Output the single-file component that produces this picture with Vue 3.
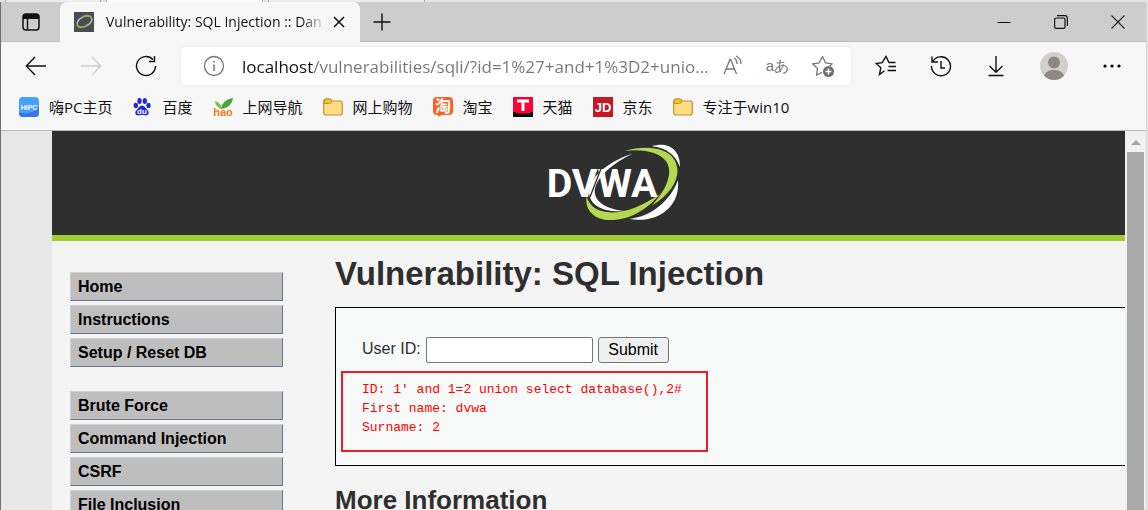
<template>
  <div class="browser">
    <div class="backdrop" aria-hidden="true">
      <span class="backdrop-tab"></span>
      <span class="backdrop-tab is-active"></span>
      <span class="backdrop-tab"></span>
    </div>

    <div class="window">
      <div class="tab-strip">
        <button class="tab-actions" type="button" aria-label="Tab actions">
          <svg width="20" height="20" viewBox="0 0 20 20">
            <rect x="2" y="2" width="16" height="16" rx="3" fill="none" stroke="#111" stroke-width="1.5" />
            <path d="M2 7V4.500Q2 2 4.500 2h11Q18 2 18 4.500V7z" fill="#111" />
            <path d="M6.500 7v11" stroke="#111" stroke-width="1.400" />
          </svg>
        </button>
        <div class="tab">
          <svg class="favicon" width="20" height="20" viewBox="0 0 20 20">
            <rect width="20" height="20" fill="#474c55" />
            <ellipse cx="10.500" cy="9.500" rx="8" ry="4.800" transform="rotate(-28 10.500 9.500)" fill="none" stroke="#c9cec0" stroke-width="1.300" />
            <path d="M3 12.500c1 4 7 4 11-.5M9 4.500c5-2 9-1 8 2.500" fill="none" stroke="#93a836" stroke-width="1.500" />
          </svg>
          <span class="tab-title">Vulnerability: SQL Injection :: Dan</span>
          <button class="tab-close" type="button" aria-label="Close tab">
            <svg width="12" height="12" viewBox="0 0 12 12"><path d="M1 1l10 10M11 1L1 11" stroke="#111" stroke-width="1.500" /></svg>
          </button>
        </div>
        <button class="new-tab" type="button" aria-label="New tab">
          <svg width="18" height="18" viewBox="0 0 18 18"><path d="M9 .5v17M.5 9h17" stroke="#111" stroke-width="1.400" /></svg>
        </button>
        <div class="window-controls">
          <button type="button" aria-label="Minimize">
            <svg width="14" height="14" viewBox="0 0 14 14"><path d="M.5 7.500h13" stroke="#111" /></svg>
          </button>
          <button type="button" aria-label="Restore">
            <svg width="14" height="14" viewBox="0 0 14 14" fill="none" stroke="#111">
              <rect x=".6" y="3" width="10.400" height="10.400" rx="1.500" stroke-width="1.200" />
              <path d="M3 .7H11q2.300 0 2.300 2.300v8" stroke-width="1.200" />
            </svg>
          </button>
          <button type="button" aria-label="Close">
            <svg width="14" height="14" viewBox="0 0 14 14"><path d="M.5.5l13 13M13.500.5l-13 13" stroke="#222" stroke-width="1.100" /></svg>
          </button>
        </div>
      </div>

      <div class="toolbar">
        <button class="tool" type="button" aria-label="Back">
          <svg width="22" height="22" viewBox="0 0 22 22"><path d="M21 11H1.500M10 2L1.300 11l8.700 9" class="line" /></svg>
        </button>
        <button class="tool is-disabled" type="button" aria-label="Forward" disabled>
          <svg width="22" height="22" viewBox="0 0 22 22"><path d="M1 11h19.500M12 2l8.700 9-8.700 9" class="line" /></svg>
        </button>
        <button class="tool" type="button" aria-label="Refresh">
          <svg width="22" height="22" viewBox="0 0 22 22"><path d="M20.500 11a9.500 9.500 0 1 1-2.600-6.500M19.500 1v5.500H14" class="line" /></svg>
        </button>
        <div class="address-bar">
          <button class="inner-tool site-info" type="button" aria-label="Site information">
            <svg width="22" height="22" viewBox="0 0 22 22" fill="none" stroke="#757575">
              <circle cx="11" cy="11" r="9.500" stroke-width="1.300" />
              <path d="M11 9.500V16" stroke-width="1.500" />
              <circle cx="11" cy="6.700" r="1" fill="#757575" stroke="none" />
            </svg>
          </button>
          <input v-model="address" class="address" type="text" aria-label="Address" />
          <button class="inner-tool" type="button" aria-label="Read aloud">
            <svg width="22" height="22" viewBox="0 0 22 22" fill="none" stroke="#767676" stroke-width="1.300">
              <path d="M2 19L8 4.500h.6L14.500 19M4 14h8.500M12 3c2 1 3 3 3 6M14 1c3.500 1.500 5 4.500 5 8" />
            </svg>
          </button>
          <button class="inner-tool translate" type="button" aria-label="Translate">aあ</button>
          <button class="inner-tool" type="button" aria-label="Add to favorites">
            <svg width="24" height="24" viewBox="0 0 24 24" fill="none" stroke="#767676" stroke-width="1.300" stroke-linejoin="round">
              <path d="M11 18.200l-5.500 3 1-6.700L1.500 9.800l6.700-1L11.500 2.500l3 6.300 6.700 1-2.500 2.400" />
              <circle cx="17.500" cy="17.500" r="5.500" fill="#6f6f6f" stroke="none" />
              <path d="M17.500 14.500v6M14.500 17.500h6" stroke="#fff" stroke-width="1.500" />
            </svg>
          </button>
        </div>
        <button class="tool" type="button" aria-label="Favorites">
          <svg width="22" height="22" viewBox="0 0 22 22">
            <path d="M9.500 15.800L4.500 19.500l1.300-6.800L1.200 8.500l6-.8L11 1.500l3 6h6.500M13.500 11.500h7.500M12.500 15.500h8.500" class="line" />
          </svg>
        </button>
        <button class="tool" type="button" aria-label="History">
          <svg width="22" height="22" viewBox="0 0 22 22"><path d="M2.500 7A9.500 9.500 0 1 1 1.500 11M2 1.500V7h6M11 6v7h4" class="line" /></svg>
        </button>
        <button class="tool" type="button" aria-label="Downloads">
          <svg width="22" height="22" viewBox="0 0 22 22"><path d="M11 1v16M4.500 11l6.500 6.300 6.500-6.300M3.500 20.500h15" class="line" /></svg>
        </button>
        <button class="tool profile" type="button" aria-label="Profile">
          <svg width="28" height="28" viewBox="0 0 28 28">
            <circle cx="14" cy="14" r="14" fill="#d2d0cd" />
            <circle cx="14" cy="10.500" r="6" fill="#8b8885" />
            <path d="M4 23.700C5.500 20 9 18 14 18s8.500 2 10 5.700A14 14 0 0 1 4 23.700z" fill="#8b8885" />
          </svg>
        </button>
        <button class="tool" type="button" aria-label="Settings and more">
          <svg width="18" height="4" viewBox="0 0 18 4"><circle cx="2" cy="2" r="1.600" /><circle cx="9" cy="2" r="1.600" /><circle cx="16" cy="2" r="1.600" /></svg>
        </button>
      </div>

      <nav class="bookmarks" aria-label="Bookmarks">
        <a v-for="item in bookmarks" :key="item.label" href="#" class="bookmark">
          <svg v-if="item.icon === 'hipc'" width="20" height="20" viewBox="0 0 20 20">
            <rect width="20" height="20" rx="4" fill="#43a2fb" />
            <path d="M0 15c8 3 16 0 20-5v6q0 4-4 4H4q-4 0-4-4z" fill="#3974ef" />
            <text x="10" y="12.500" class="icon-text" font-size="7" fill="#fff">HiPC</text>
          </svg>
          <svg v-else-if="item.icon === 'baidu'" width="20" height="20" viewBox="0 0 20 20">
            <rect width="20" height="20" fill="#fff" />
            <g fill="#2529d8">
              <ellipse cx="3.800" cy="8.500" rx="2.200" ry="2.800" />
              <ellipse cx="7.500" cy="4" rx="2.200" ry="3" />
              <ellipse cx="12.800" cy="4" rx="2.200" ry="3" />
              <ellipse cx="16.500" cy="8.500" rx="2.200" ry="2.800" />
              <path d="M10 8.500c2.500 0 3.500 2.500 5.500 4.500 2.500 2.600.8 5.500-1.500 5.500-2 0-2.500-.4-4-.4s-2 .4-4 .4c-2.300 0-4-2.900-1.500-5.500 2-2 3-4.500 5.500-4.500z" />
            </g>
            <text x="10" y="17" class="icon-text" font-size="8" fill="#fff">du</text>
          </svg>
          <svg v-else-if="item.icon === 'hao'" width="20" height="20" viewBox="0 0 20 20">
            <path d="M8 12C9 5 14 2 20 1c-1 6-5 10-12 11z" fill="#4aa52e" />
            <path d="M9 12C8 7 6 5 2 4c0 4 3 7 7 8z" fill="#7dc242" />
            <text x="10" y="19" class="icon-text" font-size="11" fill="#f07c22">hao</text>
          </svg>
          <svg v-else-if="item.icon === 'folder'" width="20" height="20" viewBox="0 0 20 20">
            <path d="M.7 5q0-3 2.500-3h3.500q1.500 0 2 2H17q2.300 0 2.300 2.500v9Q19.300 18 17 18H3Q.7 18 .7 15.500z" fill="#ffdc82" stroke="#b8932a" stroke-width="1.200" />
            <path d="M1 6.500h5.500Q8 6.500 9 4 8 2 6.500 2H3Q1 2 1 5z" fill="#f2c230" stroke="#b8932a" />
          </svg>
          <svg v-else-if="item.icon === 'taobao'" width="20" height="20" viewBox="0 0 20 20">
            <path d="M4 0h12q4 0 4 4v10q0 4-4 4H8.500L5.500 20 5 18H4q-4 0-4-4V4q0-4 4-4z" fill="#ff5f24" />
            <text x="10" y="14.500" class="icon-text" font-size="16" fill="#fff">淘</text>
          </svg>
          <svg v-else-if="item.icon === 'tmall'" width="20" height="20" viewBox="0 0 20 20">
            <rect width="20" height="20" fill="#050005" />
            <path d="M0 0h20v15h-2q-1 1.500-3 1.500H5Q3 16.500 2 15H0z" fill="#ff0036" />
            <path d="M4 4h12M10 4v10" stroke="#fff" stroke-width="3" />
          </svg>
          <svg v-else width="20" height="20" viewBox="0 0 20 20">
            <rect width="20" height="20" fill="#c81623" />
            <text x="10" y="15" class="icon-text" font-size="13" fill="#fff">JD</text>
          </svg>
          <span>{{ item.label }}</span>
        </a>
      </nav>

      <div class="viewport">
        <div class="page">
          <header class="page-header">
            <svg class="logo" width="134" height="79" viewBox="54 36 402 237" role="img" aria-label="DVWA">
              <path d="M308 68C250 84 180 133 177 180c-1 44 45 66 108 60-48-4-91-24-91-60 3-42 58-86 114-112z" fill="#fff" />
              <path d="M284 60c62-18 123-11 147 23 27 40 6 97-66 141 44-48 64-96 46-129-18-31-72-42-127-35z" fill="#b4d84f" />
              <path d="M170 196c14 62 114 69 220-8-52 66-120 84-166 78-40-7-60-34-54-70z" fill="#b4d84f" />
              <path d="M366 46c42-14 85 4 84 62-14-36-40-57-84-62z" fill="#fff" />
              <path d="M444 148c7 76-56 130-146 116 68-8 122-54 146-116z" fill="#fff" />
              <text x="50" y="197" class="logo-text">DVWA</text>
              <path d="M214 110l-34 88" stroke="#2f2f2f" stroke-width="4" />
            </svg>
          </header>
          <div class="page-body">
            <nav class="menu" aria-label="Main menu">
              <ul v-for="(group, index) in menu" :key="index">
                <li v-for="entry in group" :key="entry">
                  <a href="#">{{ entry }}</a>
                </li>
              </ul>
            </nav>
            <main class="content">
              <h1>Vulnerability: SQL Injection</h1>
              <section class="vulnerable">
                <form @submit.prevent>
                  <label for="user-id">User ID:</label>
                  <input id="user-id" v-model="userId" type="text" />
                  <button type="submit">Submit</button>
                </form>
                <pre class="result">{{ result }}</pre>
              </section>
              <h2>More Information</h2>
            </main>
          </div>
        </div>
        <div class="scrollbar" aria-hidden="true">
          <span class="scroll-up"></span>
          <span class="scroll-thumb"></span>
        </div>
      </div>
    </div>
  </div>
</template>

<script setup>
import { ref } from "vue";

const address = ref("localhost/vulnerabilities/sqli/?id=1%27+and+1%3D2+unio...");
const userId = ref("");

const bookmarks = [
  { icon: "hipc", label: "嗨PC主页" },
  { icon: "baidu", label: "百度" },
  { icon: "hao", label: "上网导航" },
  { icon: "folder", label: "网上购物" },
  { icon: "taobao", label: "淘宝" },
  { icon: "tmall", label: "天猫" },
  { icon: "jd", label: "京东" },
  { icon: "folder", label: "专注于win10" },
];

const menu = [
  ["Home", "Instructions", "Setup / Reset DB"],
  ["Brute Force", "Command Injection", "CSRF", "File Inclusion"],
];

const result = "ID: 1' and 1=2 union select database(),2#\nFirst name: dvwa\nSurname: 2";
</script>

<style>
body {
  margin: 0;
  overflow: hidden;
}
</style>

<style scoped>
* {
  box-sizing: border-box;
}

.browser {
  display: flex;
  flex-direction: column;
  height: 100vh;
  overflow: hidden;
  background: #e4e4e4;
  font-family: "Open Sans", "Noto Sans CJK SC", sans-serif;
}

.browser button {
  display: flex;
  align-items: center;
  justify-content: center;
  padding: 0;
  border: 0;
  background: none;
}

.backdrop {
  display: flex;
  gap: 5px;
  height: 2px;
  padding-left: 5px;
  flex: none;
}

.backdrop-tab {
  width: 96px;
  border: solid #aaa;
  border-width: 0 1px;
  background: #ededed;
}

.backdrop-tab.is-active,
.backdrop-tab:last-child {
  width: 157px;
}

.backdrop-tab.is-active {
  background: #fff;
}

.window {
  display: flex;
  flex: 1;
  flex-direction: column;
  min-height: 0;
  margin-right: 1px;
  border-left: 1px solid #707070;
  border-right: 1px solid #d8d8d8;
  background: #f7f7f7;
}

.tab-strip {
  display: flex;
  flex: none;
  height: 40px;
  background: #cdcdcd;
  box-shadow: inset 0 -1px #bdbdbd;
}

.browser .tab-actions {
  width: 59px;
}

.tab {
  display: flex;
  align-items: center;
  width: 300px;
  padding: 0 9px 0 14px;
  border-radius: 7px 7px 0 0;
  background: #f7f7f7;
}

.favicon {
  flex: none;
  margin-right: 12px;
}

.tab-title {
  flex: 1;
  color: #111;
  font-size: 14px;
  line-height: 20px;
  white-space: nowrap;
  mask-image: linear-gradient(to right, #000 88%, transparent);
}

.browser .tab-close {
  width: 24px;
  height: 24px;
}

.browser .new-tab {
  width: 44px;
}

.window-controls {
  display: flex;
  margin-left: auto;
}

.browser .window-controls button {
  width: 57px;
}

.toolbar {
  display: flex;
  flex: none;
  align-items: center;
  height: 48px;
  padding: 0 7px;
}

.browser .tool {
  flex: none;
  width: 55px;
  height: 38px;
}

.browser .profile {
  width: 61px;
}

.line {
  fill: none;
  stroke: #111;
  stroke-width: 1.4px;
}

.is-disabled .line {
  stroke: #cfcfcf;
}

.address-bar {
  display: flex;
  flex: 1;
  align-items: center;
  min-width: 0;
  height: 38px;
  margin: 0 7px 0 8px;
  padding: 0 6px 0 10px;
  border-radius: 5px;
  background: #fff;
  box-shadow: 0 0 4px #e9e9e9;
}

.browser .inner-tool {
  flex: none;
  width: 45px;
  height: 36px;
}

.browser .site-info {
  margin-right: 6px;
}

.address {
  flex: 1;
  min-width: 0;
  height: 32px;
  padding: 0;
  border: 0;
  outline: 0;
  background: linear-gradient(to right, #111 71px, #767676 71px);
  background-clip: text;
  color: transparent;
  font: 17px "Open Sans", sans-serif;
}

.browser .translate {
  color: #767676;
  font-size: 15px;
}

.bookmarks {
  display: flex;
  flex: none;
  align-items: center;
  gap: 20px;
  height: 41px;
  padding: 0 18px 6px;
  border-bottom: 1px solid #b9b9b9;
}

.bookmark {
  display: flex;
  align-items: center;
  gap: 10px;
  color: #111;
  font-size: 15px;
  line-height: 22px;
  text-decoration: none;
  white-space: nowrap;
}

.icon-text {
  font-family: "Liberation Sans", "Noto Sans CJK SC", sans-serif;
  font-weight: 700;
  text-anchor: middle;
}

.viewport {
  display: flex;
  flex: 1;
  min-height: 0;
  overflow: hidden;
  background: #e7e7e7;
}

.page {
  flex: 1;
  min-width: 0;
  height: max-content;
  min-height: 100%;
  margin-left: 51px;
  background: #f4f4f4;
  color: #2f2f2f;
  font-family: "Liberation Sans", Arial, sans-serif;
  font-size: 16px;
}

.page-header {
  display: flex;
  justify-content: center;
  height: 110px;
  padding: 12px 0 0 52px;
  border-bottom: 6px solid #a1cc33;
  background: #2f2f2f;
}

.logo-text {
  fill: #fff;
  font-family: Roboto, sans-serif;
  font-size: 118px;
  font-weight: 700;
}

.page-body {
  display: flex;
  gap: 52px;
  padding-left: 18px;
}

.menu {
  flex: none;
  width: 213px;
  padding-top: 31px;
}

.menu ul {
  display: flex;
  flex-direction: column;
  gap: 4px;
  margin: 0 0 24px;
  padding: 0;
  list-style: none;
}

.menu a {
  display: block;
  height: 29px;
  padding-left: 7px;
  border: 1px solid;
  border-color: #d0d0d0 #6b7390 #6b7390 #d0d0d0;
  background: #bebebe;
  color: #000;
  font-weight: 700;
  line-height: 27px;
  text-decoration: none;
}

.content {
  flex: 1;
  min-width: 0;
}

.content h1 {
  margin: 14px 0;
  font-size: 33px;
  line-height: 38px;
}

.vulnerable {
  height: 159px;
  padding: 29px 0 0 5px;
  border: 1px solid #000;
  border-right: 0;
  background: #f8faf9;
}

.vulnerable form {
  display: flex;
  gap: 5px;
  padding-left: 21px;
}

.vulnerable label {
  line-height: 24px;
}

.vulnerable input {
  width: 167px;
  height: 26px;
  padding: 1px 2px;
  border: 1px solid #767676;
  border-radius: 2px;
  background: #fff;
  font: inherit;
}

.vulnerable button {
  width: 71px;
  height: 26px;
  border: 1px solid #767676;
  border-radius: 3px;
  background: #efefef;
  color: #000;
  font: inherit;
}

.result {
  width: 367px;
  height: 81px;
  margin: 8px 0 0;
  padding: 7px 19px;
  border: 2px solid #ee1c25;
  color: #f00;
  font-family: "Liberation Mono", monospace;
  font-size: 13px;
  line-height: 19px;
}

.content h2 {
  margin: 19px 0;
  font-size: 26px;
  line-height: 30px;
}

.scrollbar {
  display: flex;
  flex: none;
  flex-direction: column;
  align-items: center;
  width: 21px;
  background: #f1f1f1;
}

.scroll-up {
  margin: 9px 0 7px;
  border: 5px solid transparent;
  border-top: 0;
  border-bottom-color: #a3a3a3;
}

.scroll-thumb {
  flex: 1;
  width: 17px;
  background: #a8a8a8;
}
</style>
